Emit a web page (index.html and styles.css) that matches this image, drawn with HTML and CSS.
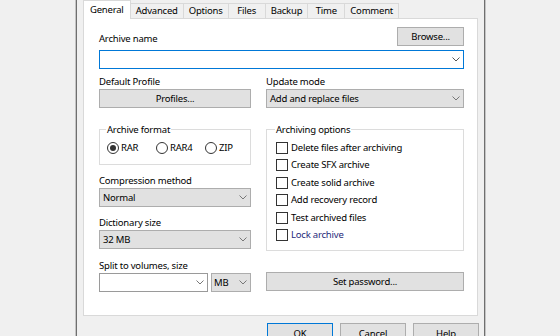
FILE: index.html
```html
<!DOCTYPE html>
<html>
<head>
<meta charset="utf-8">
<link rel="stylesheet" href="styles.css">
</head>
<body>
<div class="screen">
  <div class="window">
    <div class="tabs">
      <div class="tab active">General</div>
      <div class="tab">Advanced</div>
      <div class="tab">Options</div>
      <div class="tab">Files</div>
      <div class="tab">Backup</div>
      <div class="tab">Time</div>
      <div class="tab">Comment</div>
    </div>
    <div class="panel">
      <div class="name-row">
        <div class="lbl">Archive name</div>
        <div class="btn browse">Browse...</div>
      </div>
      <div class="combo edit focus name-input">
        <span class="txt"></span>
        <span class="chev"><svg width="8" height="5" viewBox="0 0 8 5"><path d="M0.5 0.5 L4 4 L7.5 0.5" fill="none" stroke="#555"/></svg></span>
      </div>

      <div class="cols row-profile">
        <div class="field">
          <div class="lbl">Default Profile</div>
          <div class="btn">Profiles...</div>
        </div>
        <div class="field">
          <div class="lbl">Update mode</div>
          <div class="combo">
            <span class="txt">Add and replace files</span>
            <span class="chev"><svg width="8" height="5" viewBox="0 0 8 5"><path d="M0.5 0.5 L4 4 L7.5 0.5" fill="none" stroke="#777"/></svg></span>
          </div>
        </div>
      </div>

      <div class="cols row-mid">
        <div class="left">
          <div class="group format">
            <div class="legend">Archive format</div>
            <div class="radios">
              <div class="radio-item"><span class="radio on"><span class="dot"></span></span>RAR</div>
              <div class="radio-item"><span class="radio"></span>RAR4</div>
              <div class="radio-item"><span class="radio"></span>ZIP</div>
            </div>
          </div>
          <div class="field gap-field">
            <div class="lbl">Compression method</div>
            <div class="combo">
              <span class="txt">Normal</span>
              <span class="chev"><svg width="8" height="5" viewBox="0 0 8 5"><path d="M0.5 0.5 L4 4 L7.5 0.5" fill="none" stroke="#777"/></svg></span>
            </div>
          </div>
          <div class="field gap-field">
            <div class="lbl">Dictionary size</div>
            <div class="combo">
              <span class="txt">32 MB</span>
              <span class="chev"><svg width="8" height="5" viewBox="0 0 8 5"><path d="M0.5 0.5 L4 4 L7.5 0.5" fill="none" stroke="#777"/></svg></span>
            </div>
          </div>
        </div>
        <div class="group options">
          <div class="legend">Archiving options</div>
          <div class="checks">
            <div class="check-item"><span class="check"></span>Delete files after archiving</div>
            <div class="check-item"><span class="check"></span>Create SFX archive</div>
            <div class="check-item"><span class="check"></span>Create solid archive</div>
            <div class="check-item"><span class="check"></span>Add recovery record</div>
            <div class="check-item"><span class="check"></span>Test archived files</div>
            <div class="check-item hot"><span class="check"></span>Lock archive</div>
          </div>
        </div>
      </div>

      <div class="cols row-bottom">
        <div class="field">
          <div class="lbl">Split to volumes, size</div>
          <div class="split">
            <div class="combo edit size">
              <span class="txt"></span>
              <span class="chev"><svg width="8" height="5" viewBox="0 0 8 5"><path d="M0.5 0.5 L4 4 L7.5 0.5" fill="none" stroke="#777"/></svg></span>
            </div>
            <div class="combo unit">
              <span class="txt">MB</span>
              <span class="chev"><svg width="8" height="5" viewBox="0 0 8 5"><path d="M0.5 0.5 L4 4 L7.5 0.5" fill="none" stroke="#777"/></svg></span>
            </div>
          </div>
        </div>
        <div class="btn password">Set password...</div>
      </div>
    </div>
    <div class="actions">
      <div class="btn dlg default">OK</div>
      <div class="btn dlg">Cancel</div>
      <div class="btn dlg">Help</div>
    </div>
  </div>
</div>
</body>
</html>
```
FILE: styles.css
```css
* { box-sizing: border-box; }
html, body { margin: 0; padding: 0; }
body {
  width: 560px;
  height: 336px;
  overflow: hidden;
  background: #f0f0f0;
  font-family: "Noto Sans", "Open Sans", sans-serif;
  font-size: 9.5px;
  letter-spacing: -0.2px;
  color: #000;
}
.screen { display: flex; height: 336px; }
.window {
  margin-left: 76px;
  width: 409px;
  height: 360px;
  border-left: 1px solid #6f6f6f;
  border-right: 1px solid #6f6f6f;
  box-shadow: -1px 0 0 #c4c4c4, 1px 0 0 #c4c4c4;
  background: #f0f0f0;
  padding: 0 5px 0 6px;
}
.tabs {
  display: flex;
  align-items: flex-end;
  height: 18px;
  padding-left: 1px;
}
.tab {
  flex: none;
  height: 15px;
  line-height: 14px;
  padding: 0 5px;
  min-width: 38px;
  text-align: center;
  border: 1px solid #d9d9d9;
  border-bottom: none;
  margin-left: -1px;
  background: #f0f0f0;
  white-space: nowrap;
}
.tab.active {
  height: 19px;
  line-height: 17px;
  padding: 0 6px;
  background: #fff;
  margin-bottom: -1px;
  position: relative;
  z-index: 1;
}
.panel {
  width: 395px;
  height: 298px;
  background: #fff;
  border: 1px solid #d9d9d9;
  padding: 8px 13px 0 15px;
}
.lbl { line-height: 14px; height: 14px; white-space: nowrap; }
.btn {
  height: 19px;
  line-height: 17px;
  background: #e1e1e1;
  border: 1px solid #adadad;
  text-align: center;
  white-space: nowrap;
}
.name-row {
  display: flex;
  justify-content: space-between;
  align-items: flex-end;
  height: 19px;
}
.browse { width: 67px; }
.combo {
  height: 19px;
  display: flex;
  align-items: center;
  background: #e1e1e1;
  border: 1px solid #adadad;
  padding-left: 3px;
}
.combo .txt { flex: 1; white-space: nowrap; line-height: 17px; }
.combo .chev {
  width: 15px;
  height: 17px;
  display: flex;
  align-items: center;
  justify-content: center;
}
.combo .chev svg { display: block; }
.combo.edit { background: #fff; border-color: #9a9a9a; }
.combo.focus { border-color: #0078d7; }
.name-input { margin-top: 4px; }
.cols {
  display: grid;
  grid-template-columns: 152px 198px;
  column-gap: 15px;
}
.row-profile { margin-top: 6px; }
.row-mid { margin-top: 21px; align-items: start; }
.left { display: flex; flex-direction: column; }
.group {
  border: 1px solid #dcdcdc;
  padding-left: 7px;
}
.legend {
  display: block;
  width: max-content;
  margin-top: -7px;
  margin-left: -1px;
  line-height: 14px;
  height: 14px;
  background: #fff;
  padding: 0 1px;
}
.format { height: 36px; }
.radios {
  display: grid;
  grid-template-columns: 49px 49px 49px;
  margin-top: 4px;
}
.radio-item { display: flex; align-items: center; height: 14px; line-height: 14px; }
.radio {
  width: 12px;
  height: 12px;
  border: 1px solid #333;
  border-radius: 50%;
  margin-right: 2px;
  display: flex;
  align-items: center;
  justify-content: center;
  flex: none;
}
.radio .dot { width: 6px; height: 6px; border-radius: 50%; background: #333; }
.gap-field { margin-top: 9px; }
.options { height: 122px; padding-left: 9px; }
.checks { margin-top: 2px; }
.check-item {
  display: flex;
  align-items: center;
  height: 17.5px;
  line-height: 14px;
  white-space: nowrap;
}
.check {
  width: 12px;
  height: 12px;
  border: 1px solid #333;
  background: #fff;
  margin-right: 3px;
  flex: none;
}
.hot { color: #1f2a7a; }
.row-bottom { margin-top: 8px; align-items: end; }
.split { display: flex; gap: 3px; }
.size { width: 109px; }
.unit { width: 40px; padding-left: 2px; }
.password { margin-bottom: 1px; }
.actions {
  display: flex;
  justify-content: flex-end;
  gap: 7px;
  margin-top: 7px;
}
.dlg { width: 66px; height: 23px; line-height: 20px; }
.default { border-color: #0078d7; }
```
